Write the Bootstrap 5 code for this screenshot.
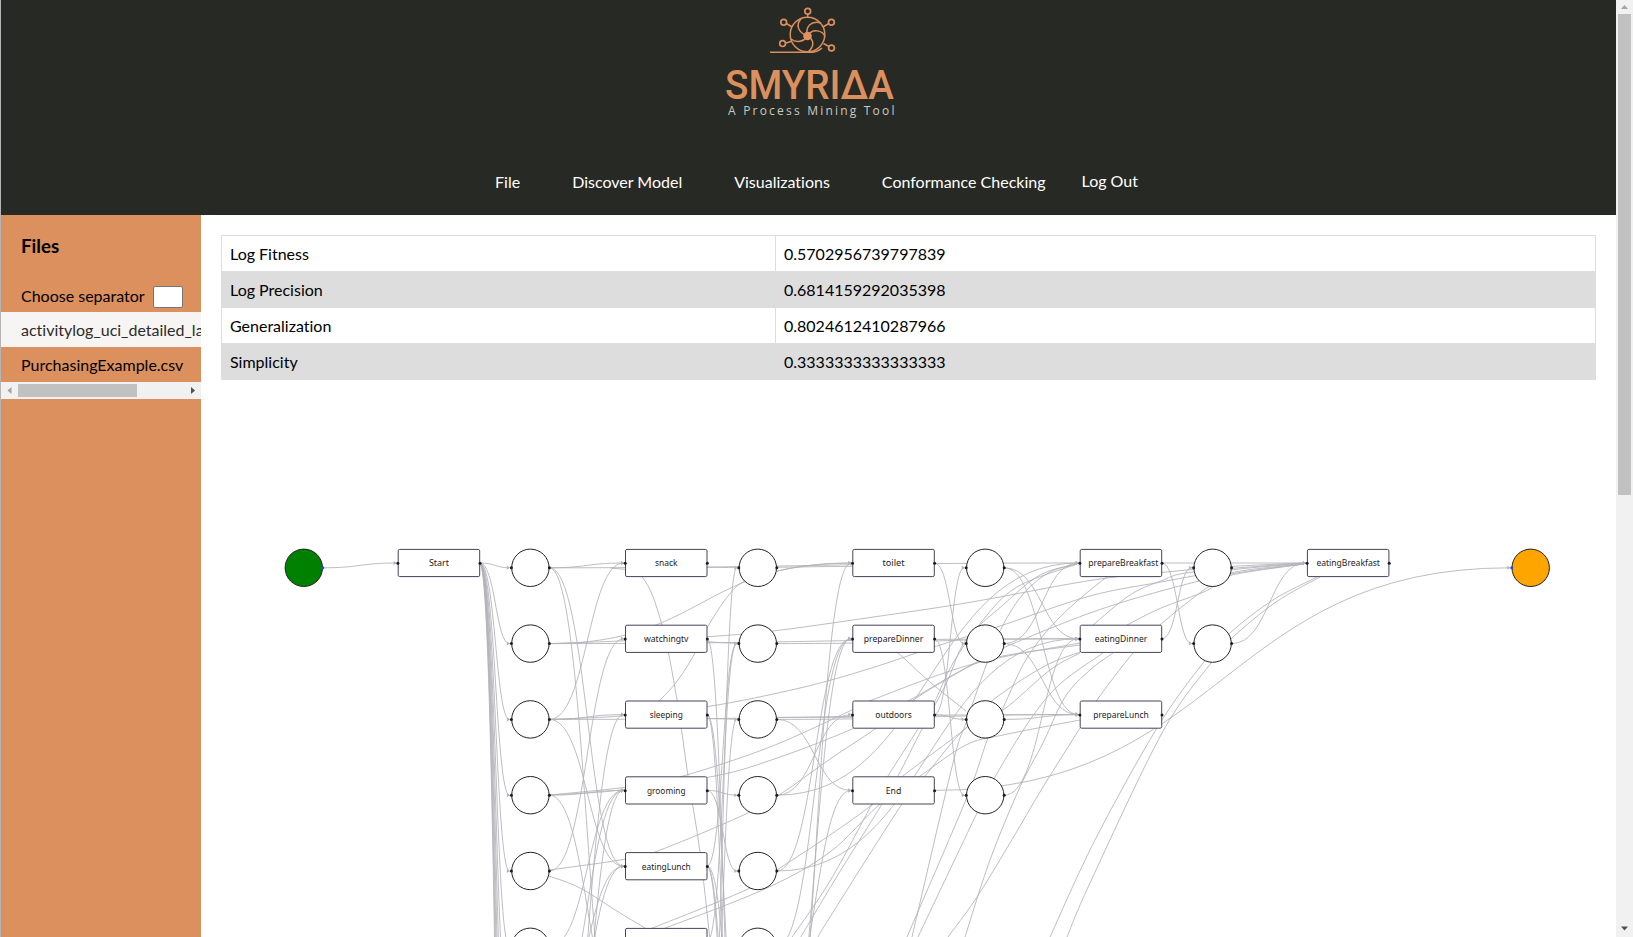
<!DOCTYPE html>
<html lang="en">
<head>
<meta charset="utf-8">
<title>SMYRIDA - A Process Mining Tool</title>
<link href="https://cdn.jsdelivr.net/npm/bootstrap@5.3.0/dist/css/bootstrap.min.css" rel="stylesheet">
<style>
html,body{height:100%;overflow:hidden}
body{font-family:Lato,"Liberation Sans",sans-serif;font-size:16px;line-height:24px;color:#000;background:#fff;font-variant-ligatures:none}
.page-shell{height:937px;border-left:1px solid #b5b5b5}
.top-area{height:215px;background:#272924}
.brand-logo{height:130px;margin-left:2px}
.main-menu{padding-top:40px;padding-left:16px}
.main-menu a{color:#fff;text-decoration:none;line-height:24px}
.main-menu .m-item{margin-right:52px}
.main-menu .m-last{margin-right:36px}
.main-menu .logout{margin-top:-1px}
.files-pane{width:200px;background:#dc905d;flex:none}
.files-pane h2{font-size:18.72px;font-weight:700;line-height:24px;margin:19px 0 0 20px}
.sep-row{margin-top:24px;height:30px;padding-left:20px}
.sep-row label{margin-top:-2px}
.sep-row input{width:30px;height:22px;border:1px solid #767676;border-radius:2px;margin-left:8px;padding:0}
.file-row{height:35px;line-height:36px;padding-left:20px;white-space:nowrap;overflow:hidden}
.file-row.current{background:#f7f5f3;color:#2b2b2b}
.hbar{height:17px;background:#f1f1f1}
.hthumb{width:119px;height:13px;background:#c1c1c1}
.vbar{width:17px;background:#f1f1f1;flex:none}
.vthumb{width:13px;height:481px;background:#c1c1c1}
.metrics{margin:20px 20px 0 20px;width:1375px;border-collapse:collapse;table-layout:fixed}
.metrics td{border:1px solid #ddd;height:36px;padding:0 8px;line-height:24px}
.metrics tr:nth-child(even){background:#ddd}
.flow{display:block}
.flow .edge{fill:none;stroke:#b1b1b7;stroke-width:1;stroke-opacity:.85}
.flow .box{fill:#fff;stroke:#46435a;stroke-width:1}
.flow .place{fill:#fff;stroke:#222;stroke-width:1}
.flow text{font-family:"Noto Sans",sans-serif;font-size:9.3px;text-anchor:middle;fill:#222}
</style>
</head>
<body>
<div class="page-shell d-flex">
  <div class="d-flex flex-column flex-grow-1 overflow-hidden">
    <header class="top-area d-flex flex-column">
      <div class="brand-logo d-flex justify-content-center">
        <svg width="220" height="130" viewBox="700 0 220 130">
          <g fill="none" stroke="#d98e5e" stroke-width="1.5">
            <circle cx="807.5" cy="34.5" r="17.3"/>
            <path d="M770 52.3H813Q819 51 822 48"/>
            <path d="M807.5 36C797 32 796 24 801 19M807.5 36C805 27 811 20 821 23M807.5 36C812 28 823 30 825 37M807.5 36C815 40 814 47 808 52M807.5 36C804 42 796 43 791 39"/>
            <path d="M807.7 14V18M786.5 23.5L792 27M828.8 23.5L823 27M785.8 43L791 41.5M829 46.5L823.5 43.5"/>
            <g stroke-width="1.7"><circle cx="807.7" cy="11.2" r="2.9"/><circle cx="783.7" cy="22.3" r="2.9"/><circle cx="831.4" cy="22.3" r="2.9"/><circle cx="782.6" cy="43.6" r="2.9"/><circle cx="831.5" cy="48" r="2.9"/></g>
          </g>
          <circle cx="807.5" cy="36" r="4.3" fill="#e08f5f"/>
          <text x="725" y="99" font-family="Roboto" font-weight="500" font-size="41.5" textLength="169" lengthAdjust="spacingAndGlyphs" fill="#dc905d">SMYRIΔA</text>
          <text x="728" y="115" font-family="Open Sans" font-weight="500" font-size="12" textLength="166.500" fill="#c9c9c6">A Process Mining Tool</text>
        </svg>
      </div>
      <nav class="main-menu d-flex justify-content-center">
        <a href="#" class="m-item">File</a>
        <a href="#" class="m-item">Discover Model</a>
        <a href="#" class="m-item">Visualizations</a>
        <a href="#" class="m-last">Conformance Checking</a>
        <a href="#" class="logout">Log Out</a>
      </nav>
    </header>
    <div class="d-flex flex-grow-1">
      <aside class="files-pane d-flex flex-column">
        <h2>Files</h2>
        <div class="sep-row d-flex align-items-center"><label for="sep">Choose separator</label><input id="sep" type="text"></div>
        <div class="file-row current">activitylog_uci_detailed_labour.csv</div>
        <div class="file-row">PurchasingExample.csv</div>
        <div class="hbar d-flex align-items-center">
          <svg width="17" height="17"><path d="M10.5 5v7L6.5 8.5z" fill="#a3a3a3"/></svg>
          <div class="hthumb"></div>
          <svg class="ms-auto" width="17" height="17"><path d="M7 5v7l4-3.5z" fill="#505050"/></svg>
        </div>
      </aside>
      <main class="flex-grow-1">
        <table class="metrics">
          <colgroup><col style="width:554px"><col></colgroup>
          <tbody>
            <tr><td>Log Fitness</td><td>0.5702956739797839</td></tr>
            <tr><td>Log Precision</td><td>0.6814159292035398</td></tr>
            <tr><td>Generalization</td><td>0.8024612410287966</td></tr>
            <tr><td>Simplicity</td><td>0.3333333333333333</td></tr>
          </tbody>
        </table>
        <svg id="flow" class="flow" width="1415" height="557" viewBox="201 380 1415 557"></svg>
      </main>
    </div>
  </div>
  <div class="vbar d-flex flex-column align-items-center">
    <svg width="17" height="14"><path d="M5 9h7L8.500 5z" fill="#a3a3a3"/></svg>
    <div class="vthumb"></div>
    <svg class="mt-auto" width="17" height="17"><path d="M5 6.500h7L8.500 10.500z" fill="#505050"/></svg>
  </div>
</div>
<script>
const PITCH = 75.8;
const placeX = [303.8, 530.4, 757.8, 985.2, 1212.6, 1530.7];
const boxX = [398.2, 625.5, 852.8, 1080.2, 1307.4];
const R = 18.7, W = 81.5, H = 27.2;
// "P1.2" is row 2 of place column 1, "T1.2" the same in transition columns
function port(id, side) {
  const [c, r] = id.slice(1).split('.').map(Number);
  if (id[0] === 'P') return [placeX[c] + side * (R + .3), 567.8 + PITCH * r];
  return [boxX[c] + (side > 0 ? W : 0), 563 + PITCH * r];
}
const links = `P0.0 T0.0
T0.0 P1.0,P1.1,P1.2,P1.3,P1.4,P1.5,P1.6,P1.7,P1.8,P1.9,P1.10,P1.11
P1.0 T1.0,T3.0,T1.4,T1.7
P1.1 T2.0,T3.1
P1.2 T1.0,T1.2,T1.4,T3.2
P1.3 T1.3,T1.6
P1.4 T1.1
P1.5 T1.3
P1.6 T1.3,T1.4
P1.7 T1.4
P1.8 T1.2
P1.9 T1.3
T1.1 P2.7
T1.2 P2.6,P2.8
T1.3 P2.3,P2.4
T1.4 P2.1,P2.6,P2.8,P2.9
T1.5 P2.1
T1.7 P2.0,P2.2
P2.1 T3.1
P2.2 T3.2,T2.3
P2.3 T2.2,T3.0
P2.4 T2.1,T3.1
P2.5 T2.1
P2.6 T2.3
P2.7 T2.1
P2.8 T2.0
T2.0 P3.1
T2.1 P3.3
T2.2 P3.2,P3.0
T2.3 P5.0
P3.0 T3.1,T3.2
P3.1 T3.0,T3.2
P3.2 T3.2
P3.3 T3.1
T3.0 P4.1,T4.0
T3.1 P4.0
P4.1 T4.0`;
// long links that are routed through way points
const routed = [
 [549.5,643.6,620,641,707,636.7,773,631,870,617.5,966,603,1090,580.5,1161,572.5,1231,566.5,1304,563],
 [549.5,719.4,620,716,707,706.7,800,688,870,668.5,934,647,1003,625,1090,596,1161,582,1231,570,1304,563.5],
 [645,712,660,700,678,680,695,653,707,628,725,600,743,582,777,571,815,565,848,563],
 [549.5,795,620,790,683,776,770,747,852,710,872,700,973,664,1080,643],
 [549.5,795,620,788,715,776,780,757,852,729,910,700,966,668,1003,656,1080,645],
 [549.5,870,620,860,655,852,748,813,785,791,830,759,875,729,913,700,973,664,1003,648,1090,613,1161,591,1231,574,1304,564],
 [549,876,580,888,620,913,645,928],
 [610,567.8,642,577,662,625,677,700,688,776,700,852,710,940],
 [640,932,655,927,748,889,780,868,830,835,873,804,903,776,966,728,993,700,1043,667,1080,652],
 [640,936,668,927,767,888,830,852,880,804,920,776,966,745,1003,735,1080,720],
 [790,940,830,881,872,804,888,776,918,729,934,703,953,663,983,620,1017,587,1077,564],
 [799,940,836,878,882,804,898,776,922,729,946,684,966,640,1003,605,1040,575,1077,564],
 [818,937,830,917,902,804,925,776,967,727,1003,710,1050,670,1080,653],
 [912,937,953,763,966,723,987,663,1003,625,1024,593,1050,572,1077,564],
 [907,937,967,797,988,738,1003,708,1027,658,1060,617,1107,577,1125,571],
 [918,937,977,813,995,777,1030,720,1060,684,1103,653],
 [965,937,990,860,1020,787,1043,743,1065,697,1090,670,1113,653],
 [1093,625,1130,595,1161,581,1193,572,1304,563],
 [1127,625,1161,608,1208,590,1231,573,1304,564],
 [948,937,977,897,1010,843,1043,787,1080,728,1097,700,1133,653,1160,625,1208,587,1232,575,1304,564],
 [1050,937,1095,840,1157,728,1203,663,1230,633,1273,600,1317,577],
 [1067,937,1090,883,1162,733,1211,663,1232,638,1276,602,1320,577],
 [776.8,567.3,815,566.7,852,566.3],
 [776.8,717.3,852,717.3],
 [707,567.3,734,567.6],
 [707,641.7,734,643.3],
 [707,718.5,734,719.2],
 [880,640,898,653,930,682,966,711]
];
let out = '';
function arrow(x, y) { return `<path d="M${x-4.500} ${y-2}L${x-1.500} ${y}L${x-4.500} ${y+2}z" fill="#b1b1b7"/>`; }
for (const line of links.split('\n')) {
  const [from, list] = line.split(' ');
  for (const to of list.split(',')) {
    const [a, b] = port(from, 1), [c, d] = port(to, -1), m = (a + c) / 2;
    out += `<path class="edge" d="M${a} ${b}C${m} ${b} ${m} ${d} ${c - 2} ${d}"/>` + arrow(c, d);
  }
}
for (const p of routed) {
  const n = p.length / 2, at = i => { i = Math.max(0, Math.min(n - 1, i)); return [p[2*i], p[2*i+1]]; };
  let d = `M${p[0]} ${p[1]}`;
  for (let i = 0; i < n - 1; i++) {
    const q = at(i-1), s = at(i), e = at(i+1), z = at(i+2);
    d += `C${s[0]+(e[0]-q[0])/6} ${s[1]+(e[1]-q[1])/6} ${e[0]-(z[0]-s[0])/6} ${e[1]-(z[1]-s[1])/6} ${e[0]} ${e[1]}`;
  }
  out += `<path class="edge" d="${d}"/>`;
}
function dot(x, y, blue) { return `<circle cx="${x}" cy="${y}" r="1.500" fill="${blue ? '#1550d8' : '#1a192b'}"/>`; }
function place(id, fill) {
  const [x, y] = port(id, -1), [x2] = port(id, 1);
  out += `<circle class="place" cx="${(x + x2) / 2}" cy="${y}" r="${R}"${fill ? ` style="fill:${fill}"` : ''}/>`;
  if (fill !== 'green') out += dot(x, y, fill);
  if (fill !== 'orange') out += dot(x2, y, fill);
}
function box(id, label) {
  const [x, y] = port(id, -1);
  out += `<rect class="box" x="${x}" y="${y-13.6}" width="${W}" height="${H}" rx="1.500"/>`;
  if (label.t) out += `<text x="${x + W/2 + (label.dx || 0)}" y="${y + 3.3}" textLength="${label.w}" lengthAdjust="spacingAndGlyphs">${label.t}</text>`;
  out += dot(x - .3, y + .3) + dot(x + W + .3, y + .3);
}
place('P0.0', 'green'); place('P5.0', 'orange');
[[1,6],[2,6],[3,4],[4,2]].forEach(([c, n]) => { for (let r = 0; r < n; r++) place(`P${c}.${r}`); });
Object.entries({
  'T0.0':['Start',20], 'T1.0':['snack',22.5], 'T1.1':['watchingtv',44.5], 'T1.2':['sleeping',33], 'T1.3':['grooming',38.5],
  'T1.4':['eatingLunch',49], 'T1.5':['',0], 'T2.0':['toilet',22], 'T2.1':['prepareDinner',59.5], 'T2.2':['outdoors',36.5],
  'T2.3':['End',15.5], 'T3.0':['prepareBreakfast',70,2.3], 'T3.1':['eatingDinner',52.5], 'T3.2':['prepareLunch',55.5], 'T4.0':['eatingBreakfast',63.5]
}).forEach(([id, [t, w, dx]]) => box(id, {t, w, dx}));
document.getElementById('flow').innerHTML = out;
</script>
<script src="https://cdn.jsdelivr.net/npm/bootstrap@5.3.0/dist/js/bootstrap.bundle.min.js"></script>
</body>
</html>
